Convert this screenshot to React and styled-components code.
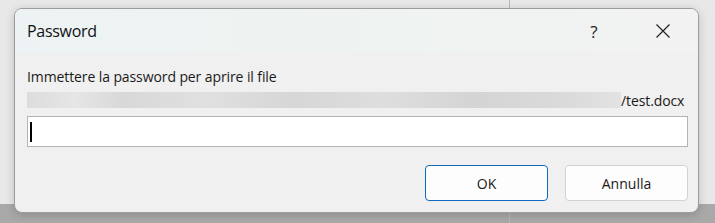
import React from "react";
import styled, { createGlobalStyle } from "styled-components";

const GlobalStyle = createGlobalStyle`
  html, body {
    margin: 0;
    padding: 0;
  }
  body {
    font-family: "Segoe UI", "Open Sans", "Noto Sans", sans-serif;
    background: #e6e6e6;
  }
`;

const Backdrop = styled.div`
  width: 715px;
  height: 223px;
  box-sizing: border-box;
  padding: 8px 16px 10px 14px;
  background:
    linear-gradient(to right, transparent 509px, #b9b9b9 509px, #b9b9b9 510px, transparent 510px),
    linear-gradient(to bottom, #e8e8e8 0, #e8e8e8 204px, #a9a9a9 204px);
  overflow: hidden;
`;

const Dialog = styled.div`
  width: 685px;
  height: 205px;
  box-sizing: border-box;
  border: 1px solid #9c9c9c;
  border-radius: 8px;
  background: #f0f0f0;
  box-shadow: 0 2px 10px rgba(0, 0, 0, 0.18);
  display: flex;
  flex-direction: column;
  overflow: hidden;
`;

const TitleBar = styled.div`
  height: 44px;
  display: flex;
  align-items: center;
  padding-left: 12px;
  background: linear-gradient(to right, #edf3f4, #eef3f1 50%, #f2f2f2);
`;

const Title = styled.div`
  flex: 1;
  font-size: 16px;
  color: #111;
  letter-spacing: -0.3px;
`;

const TitleButton = styled.div`
  width: ${(p) => p.$w}px;
  height: 44px;
  display: flex;
  align-items: center;
  justify-content: center;
  color: #222;
  font-size: 17px;
`;

const Body = styled.div`
  flex: 1;
  display: flex;
  flex-direction: column;
  padding: 14px 10px 0 12px;
`;

const Label = styled.div`
  font-size: 14px;
  color: #1a1a1a;
  height: 20px;
  line-height: 20px;
  letter-spacing: -0.1px;
`;

const PathRow = styled.div`
  display: flex;
  align-items: center;
  height: 20px;
  margin-top: 3px;
  font-size: 14px;
  color: #1a1a1a;
  letter-spacing: -0.1px;
`;

const Redacted = styled.div`
  width: 594px;
  height: 16px;
  background: linear-gradient(
    to right,
    #dcdcdc 0, #e6e6e6 8%, #d8d8d8 16%, #e0e0e0 30%, #d6d6d6 45%,
    #dedede 60%, #d4d4d4 75%, #dadada 90%, #e2e2e2 100%
  );
`;

const Input = styled.div`
  height: 31px;
  box-sizing: border-box;
  margin-top: 6px;
  width: 661px;
  background: #fff;
  border: 1px solid #b4b4b4;
  display: flex;
  align-items: center;
  padding-left: 2px;
`;

const Caret = styled.div`
  width: 1.5px;
  height: 20px;
  background: #000;
`;

const Footer = styled.div`
  display: flex;
  justify-content: flex-end;
  gap: 17px;
  padding-top: 18px;
`;

const Button = styled.div`
  width: 123px;
  height: 36px;
  box-sizing: border-box;
  border-radius: 4px;
  background: #fdfdfd;
  border: 1px solid ${(p) => (p.$primary ? "#0f6cbd" : "#d2d2d2")};
  display: flex;
  align-items: center;
  justify-content: center;
  font-size: 14px;
  color: #1a1a1a;
`;

export default function App() {
  return (
    <>
      <GlobalStyle />
      <Backdrop>
        <Dialog>
          <TitleBar>
            <Title>Password</Title>
            <TitleButton $w={68}>?</TitleButton>
            <TitleButton $w={70}>
              <svg width="16" height="16" viewBox="0 0 16 16">
                <path d="M1.5 1.5 L14.5 14.5 M14.5 1.5 L1.5 14.5" stroke="#222" strokeWidth="1.2" fill="none" />
              </svg>
            </TitleButton>
          </TitleBar>
          <Body>
            <Label>Immettere la password per aprire il file</Label>
            <PathRow>
              <Redacted />
              <span>/test.docx</span>
            </PathRow>
            <Input>
              <Caret />
            </Input>
            <Footer>
              <Button $primary>OK</Button>
              <Button>Annulla</Button>
            </Footer>
          </Body>
        </Dialog>
      </Backdrop>
    </>
  );
}
